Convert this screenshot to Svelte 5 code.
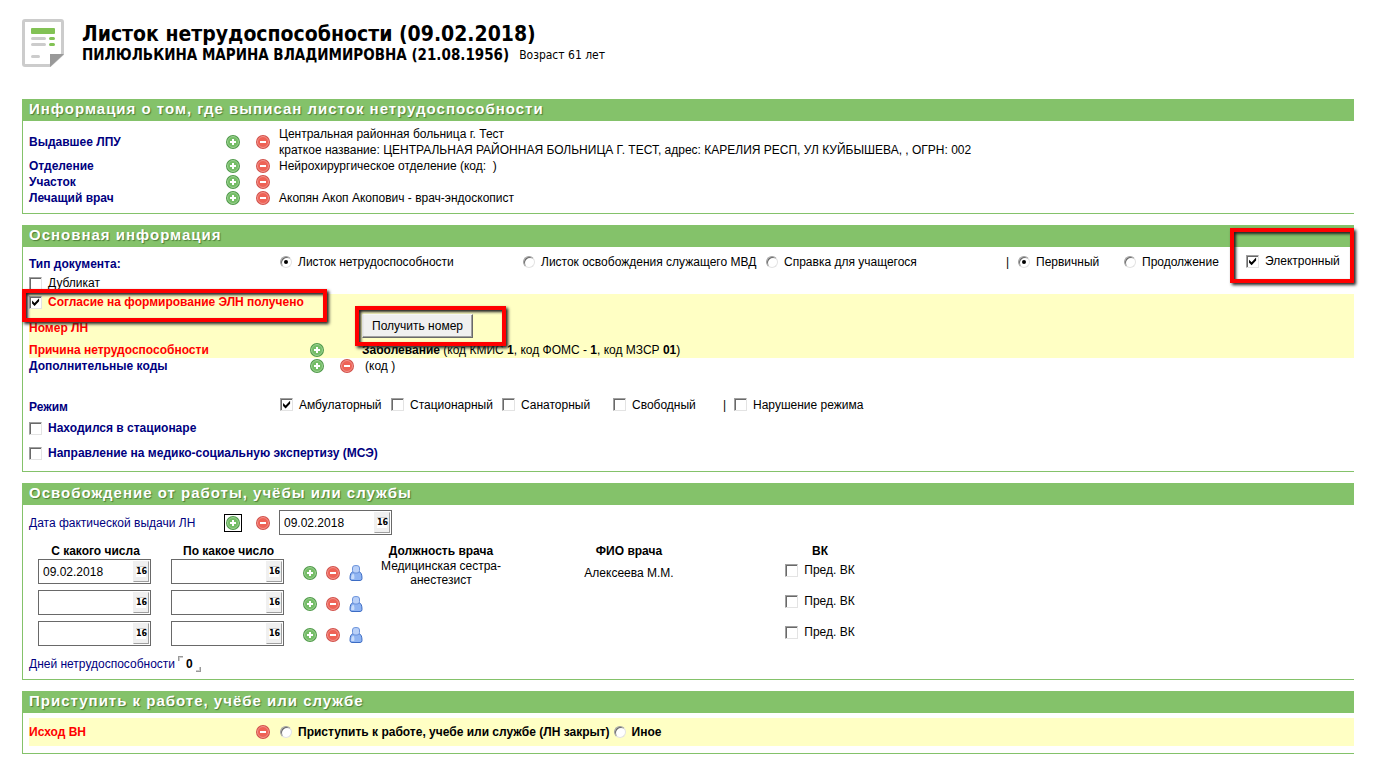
<script lang="ts">
  let docType = $state('sick');
  let docKind = $state('first');
  let outcome = $state('');
  let issueDate = $state('09.02.2018');

  const places = [
    {
      label: 'Выдавшее ЛПУ',
      lines: [
        'Центральная районная больница г. Тест',
        'краткое название: ЦЕНТРАЛЬНАЯ РАЙОННАЯ БОЛЬНИЦА Г. ТЕСТ, адрес: КАРЕЛИЯ РЕСП, УЛ КУЙБЫШЕВА, , ОГРН: 002'
      ]
    },
    { label: 'Отделение', lines: ['Нейрохирургическое отделение (код: \u00a0)'] },
    { label: 'Участок', lines: [] },
    { label: 'Лечащий врач', lines: ['Акопян Акоп Акопович - врач-эндоскопист'] }
  ];

  let periods = $state([
    { from: '09.02.2018', to: '', post: 'Медицинская сестра-анестезист', name: 'Алексеева М.М.', vk: false },
    { from: '', to: '', post: '', name: '', vk: false },
    { from: '', to: '', post: '', name: '', vk: false }
  ]);
</script>

{#snippet add()}
  <button type="button" class="icon" aria-label="Добавить">
    <svg width="14" height="14" viewBox="0 0 14 14">
      <circle cx="7" cy="7" r="7" fill="#4f9a49" />
      <circle cx="7" cy="7" r="5.500" fill="#74bd66" stroke="#a5d69b" stroke-width=".9" />
      <path d="M6 4h2v2h2v2H8v2H6V8H4V6h2z" fill="#fff" />
    </svg>
  </button>
{/snippet}

{#snippet remove()}
  <button type="button" class="icon" aria-label="Удалить">
    <svg width="14" height="14" viewBox="0 0 14 14">
      <circle cx="7" cy="7" r="7" fill="#d2504a" />
      <circle cx="7" cy="7" r="5.500" fill="#ee6256" stroke="#f59a92" stroke-width=".9" />
      <path d="M4 6h6v2H4z" fill="#fff" />
    </svg>
  </button>
{/snippet}

{#snippet person()}
  <button type="button" class="icon" aria-label="Выбрать врача">
    <svg width="14" height="16" viewBox="0 0 14 16">
      <path d="M4 6.500C1.800 7.500 1 9.500 1 13.500q0 2 2 2h8q2 0 2-2C13 9.500 12.200 7.500 10 6.500z" fill="#8fb4f2" stroke="#3c6cc4" />
      <path d="M3 9.500q-1 2-.8 4.500h3q.5-2.500-.2-5z" fill="#c9dcfa" />
      <rect x="3.500" y=".6" width="7" height="7.400" rx="2.400" fill="#b9d0f8" stroke="#6b92da" />
    </svg>
  </button>
{/snippet}

{#snippet calendar()}
  <button type="button" class="calendar" aria-label="Календарь"><span>16</span></button>
{/snippet}

<main>
  <header>
    <svg class="logo" width="42" height="48" viewBox="0 0 42 48">
      <path d="M3 1.500h36q1.500 0 1.500 1.500v32L28 46.500H3q-1.500 0-1.500-1.500V3q0-1.500 1.500-1.500z" fill="#fff" stroke="#ccc" stroke-width="3" />
      <path d="M28 48V35h14z" fill="#999" />
      <rect x="9" y="9" width="24" height="6" rx="1" fill="#82c255" />
      <g stroke-width="3" stroke-linecap="round">
        <path d="M10.500 19.500h12M10.500 25.500h12M10.500 37.500h6" stroke="#ccc" />
        <path d="M28.500 19.500h3M28.500 25.500h3" stroke="#82c255" />
      </g>
    </svg>
    <div>
      <h1>Листок нетрудоспособности (09.02.2018)</h1>
      <p class="patient"><b>ПИЛЮЛЬКИНА МАРИНА ВЛАДИМИРОВНА (21.08.1956)</b> <span>Возраст 61 лет</span></p>
    </div>
  </header>

  <section>
    <h2>Информация о том, где выписан листок нетрудоспособности</h2>
    <div class="body">
      {#each places as place}
        <div class="place">
          <b>{place.label}</b>
          {@render add()}
          {@render remove()}
          <div>
            {#each place.lines as line}<div>{line}</div>{/each}
          </div>
        </div>
      {/each}
    </div>
  </section>

  <section>
    <h2>Основная информация</h2>
    <div class="body general">
      <div class="doc-type">
        <b>Тип документа:</b>
        <label><input type="radio" value="sick" bind:group={docType} />Листок нетрудоспособности</label>
        <label><input type="radio" value="mvd" bind:group={docType} />Листок освобождения служащего МВД</label>
        <label><input type="radio" value="study" bind:group={docType} />Справка для учащегося</label>
        <span>|</span>
        <label><input type="radio" value="first" bind:group={docKind} />Первичный</label>
        <label><input type="radio" value="next" bind:group={docKind} />Продолжение</label>
        <div class="marked electronic">
          <label><input type="checkbox" checked />Электронный</label>
        </div>
      </div>
      <div class="line"><label><input type="checkbox" />Дубликат</label></div>

      <div class="required">
        <div class="consent">
          <div class="marked">
            <label><input type="checkbox" checked /><b>Согласие на формирование ЭЛН получено</b></label>
          </div>
        </div>
        <div class="number">
          <b>Номер ЛН</b>
          <div class="marked get-number"><button type="button" class="push">Получить номер</button></div>
        </div>
        <div class="code">
          <b>Причина нетрудоспособности</b>
          {@render add()}
          <span></span>
          <div class="reason"><b>Заболевание</b> (код КМИС <b>1</b>, код ФОМС - <b>1</b>, код МЗСР <b>01</b>)</div>
        </div>
      </div>
      <div class="code">
        <b>Дополнительные коды</b>
        {@render add()}
        {@render remove()}
        <div class="extra">(код )</div>
      </div>

      <div class="regime">
        <b>Режим</b>
        <label><input type="checkbox" checked />Амбулаторный</label>
        <label><input type="checkbox" />Стационарный</label>
        <label><input type="checkbox" />Санаторный</label>
        <label><input type="checkbox" />Свободный</label>
        <span>|</span>
        <label><input type="checkbox" />Нарушение режима</label>
      </div>
      <div class="single"><label><input type="checkbox" /><b>Находился в стационаре</b></label></div>
      <div class="single"><label><input type="checkbox" /><b>Направление на медико-социальную экспертизу (МСЭ)</b></label></div>
    </div>
  </section>

  <section>
    <h2>Освобождение от работы, учёбы или службы</h2>
    <div class="body">
      <div class="place issue">
        <label class="navy" for="issue-date">Дата фактической выдачи ЛН</label>
        <span class="focused">{@render add()}</span>
        {@render remove()}
        <div class="date"><input id="issue-date" type="text" bind:value={issueDate} />{@render calendar()}</div>
      </div>

      <table>
        <thead>
          <tr>
            <th class="day">С какого числа</th>
            <th class="day">По какое число</th>
            <th class="tools"></th>
            <th class="post">Должность врача</th>
            <th class="name">ФИО врача</th>
            <th class="vk">ВК</th>
          </tr>
        </thead>
        <tbody>
          {#each periods as period}
            <tr>
              <td><div class="date"><input type="text" aria-label="С какого числа" bind:value={period.from} />{@render calendar()}</div></td>
              <td><div class="date"><input type="text" aria-label="По какое число" bind:value={period.to} />{@render calendar()}</div></td>
              <td class="tool-cell"><div class="tool-row">{@render add()}{@render remove()}{@render person()}</div></td>
              <td class="post-name">{period.post}</td>
              <td class="tool-cell">{period.name}</td>
              <td><label><input type="checkbox" bind:checked={period.vk} />Пред. ВК</label></td>
            </tr>
          {/each}
        </tbody>
      </table>

      <div class="total">
        <span class="navy">Дней нетрудоспособности</span>
        <i class="corner open"></i><b>0</b><i class="corner close"></i>
      </div>
    </div>
  </section>

  <section>
    <h2>Приступить к работе, учёбе или службе</h2>
    <div class="body">
      <div class="required outcome">
        <b>Исход ВН</b>
        {@render remove()}
        <label class="dark"><input type="radio" value="work" bind:group={outcome} /><b>Приступить к работе, учебе или службе (ЛН закрыт)</b></label>
        <label class="dark"><input type="radio" value="other" bind:group={outcome} /><b>Иное</b></label>
      </div>
    </div>
  </section>
</main>

<style>
  :global(body) { background: #fff; }

  main {
    padding: 19px 24px 20px 22px;
    font: 12px/16px "Liberation Sans", Arial, sans-serif;
    color: #000;
  }
  input, button { font: inherit; color: inherit; margin: 0; }

  header { display: flex; gap: 18px; height: 80px; font-family: "DejaVu Sans Condensed", Tahoma, sans-serif; }
  .logo { flex: none; }
  h1 { margin: 3px 0 0; font-size: 21px; line-height: 24px; }
  .patient { display: flex; gap: 10px; margin: 0; line-height: 18px; }
  .patient b { font-size: 15px; }

  section {
    margin-bottom: 11px;
    border-left: 1px solid #84c26a;
    border-bottom: 1px solid #84c26a;
  }
  h2 {
    margin: 0;
    padding: 0 6px 2px;
    background: #84c26a;
    color: #fff;
    font-size: 15px;
    line-height: 20px;
    letter-spacing: 1px;
    text-shadow: 1px 1px 1px #4d7d38;
  }
  .body { padding: 5px 0 7px 6px; }
  .general { padding: 4px 0 2px 6px; }
  .body b, .navy { color: navy; }

  .icon {
    display: flex;
    padding: 0;
    border: 0;
    background: none;
    cursor: pointer;
  }
  label { display: inline-flex; align-items: center; white-space: nowrap; }

  .place { display: grid; grid-template-columns: 197px 30px 23px 1fr; align-items: center; min-height: 16px; }

  .doc-type {
    display: grid;
    grid-template-columns: 251px 243px 243px 240px 12px 106px 122px auto;
    justify-content: start;
    align-items: center;
    height: 21px;
    margin-bottom: 3px;
  }
  .doc-type b, .regime b { padding-top: 5px; }
  .line { display: flex; align-items: flex-start; height: 19px; }

  .required { background: #ffffc4; }
  .required b { color: red; }
  .consent { display: flex; height: 16px; }
  .number { display: grid; grid-template-columns: 333px auto; justify-content: start; align-items: center; height: 32px; }
  .number b { padding-top: 4px; }
  .code { display: grid; grid-template-columns: 281px 30px 22px 1fr; align-items: center; height: 16px; }
  .body .reason b, .body .dark b, .body .total b { color: #000; }
  .extra { padding-left: 3px; }

  .push {
    display: block;
    height: 24px;
    padding: 0 9px;
    border: 1px solid;
    border-color: #fff #696969 #696969 #fff;
    box-shadow: inset -1px -1px #a0a0a0;
    background: #f0f0f0;
  }

  /* red frames laid over the fields that need attention */
  .marked { position: relative; }
  .marked::after {
    content: "";
    position: absolute;
    inset: -5px -23px -12px -7px;
    border: 4px solid #f00;
    box-shadow: 2px 2px 3px #222, inset 2px 2px 3px #222;
    pointer-events: none;
  }
  .get-number::after { inset: -8px -33px -8px -7px; }
  .electronic::after { inset: -25px -14px -13px -16px; }

  .regime {
    display: grid;
    grid-template-columns: 251px 111px 111px 111px 110px 11px auto;
    justify-content: start;
    align-items: center;
    height: 21px;
    margin: 20px 0 4px;
  }
  .single { display: flex; height: 25px; }
  .single label { height: 18px; }

  input[type="checkbox"], input[type="radio"] {
    appearance: none;
    flex: none;
    display: grid;
    place-items: center;
    width: 13px;
    height: 13px;
    margin-right: 6px;
    border: 1px solid;
    border-color: #a0a0a0 #e3e3e3 #e3e3e3 #a0a0a0;
    box-shadow: inset 1px 1px #696969;
    background: #fff;
  }
  input[type="radio"] { width: 12px; height: 12px; border-radius: 50%; }
  input[type="checkbox"]:checked::before {
    content: "";
    width: 9px;
    height: 9px;
    background: #000;
    clip-path: polygon(12% 34%, 40% 60%, 90% 8%, 90% 42%, 40% 94%, 12% 66%);
  }
  input[type="radio"]:checked::before {
    content: "";
    width: 4px;
    height: 4px;
    border-radius: 50%;
    background: #000;
  }

  .issue { margin-bottom: 9px; }
  .focused { width: 14px; outline: 1px solid #000; outline-offset: 1px; }
  .date {
    display: flex;
    align-items: center;
    box-sizing: border-box;
    width: 113px;
    height: 25px;
    padding-right: 1px;
    border: 1px solid #696969;
    background: #fff;
  }
  .date input { flex: 1; min-width: 0; padding: 0 4px; border: 0; outline: 0; background: none; }
  .calendar {
    width: 16px;
    height: 21px;
    padding: 0;
    border: 1px solid;
    border-color: #f0f0f0 #a0a0a0 #a0a0a0 #f0f0f0;
    background: #f0f0f0;
  }
  .calendar span {
    display: block;
    margin: 0 2px;
    border-top: 1px solid #ccc;
    background: #fff;
    font: bold 8px/10px "DejaVu Sans", sans-serif;
    text-align: center;
  }

  table { border-collapse: collapse; table-layout: fixed; width: 865px; }
  th { padding: 0; line-height: 15px; }
  td { height: 25px; padding: 0 0 6px; text-align: center; vertical-align: middle; line-height: 14px; }
  td .date { margin: 0 9px; }
  .day { width: 133px; }
  .tools { width: 75px; }
  .post { width: 142px; }
  .name { width: 234px; }
  .tool-cell { padding-bottom: 3px; }
  .tool-row { display: flex; align-items: center; justify-content: center; gap: 9px; }
  .post-name { padding: 0 8px 3px; }

  .total { display: flex; align-items: center; gap: 3px; margin-top: 4px; }
  .corner { width: 4px; height: 4px; border: 1px solid #999; }
  .open { align-self: flex-start; border-width: 1px 0 0 1px; box-shadow: inset 1px 1px #ccc; }
  .close { align-self: flex-end; border-width: 0 1px 1px 0; box-shadow: inset -1px -1px #ccc; }

  .outcome { display: grid; grid-template-columns: 227px 24px auto auto; justify-content: start; align-items: center; height: 28px; }
  .outcome label { margin-right: 4px; }
</style>
